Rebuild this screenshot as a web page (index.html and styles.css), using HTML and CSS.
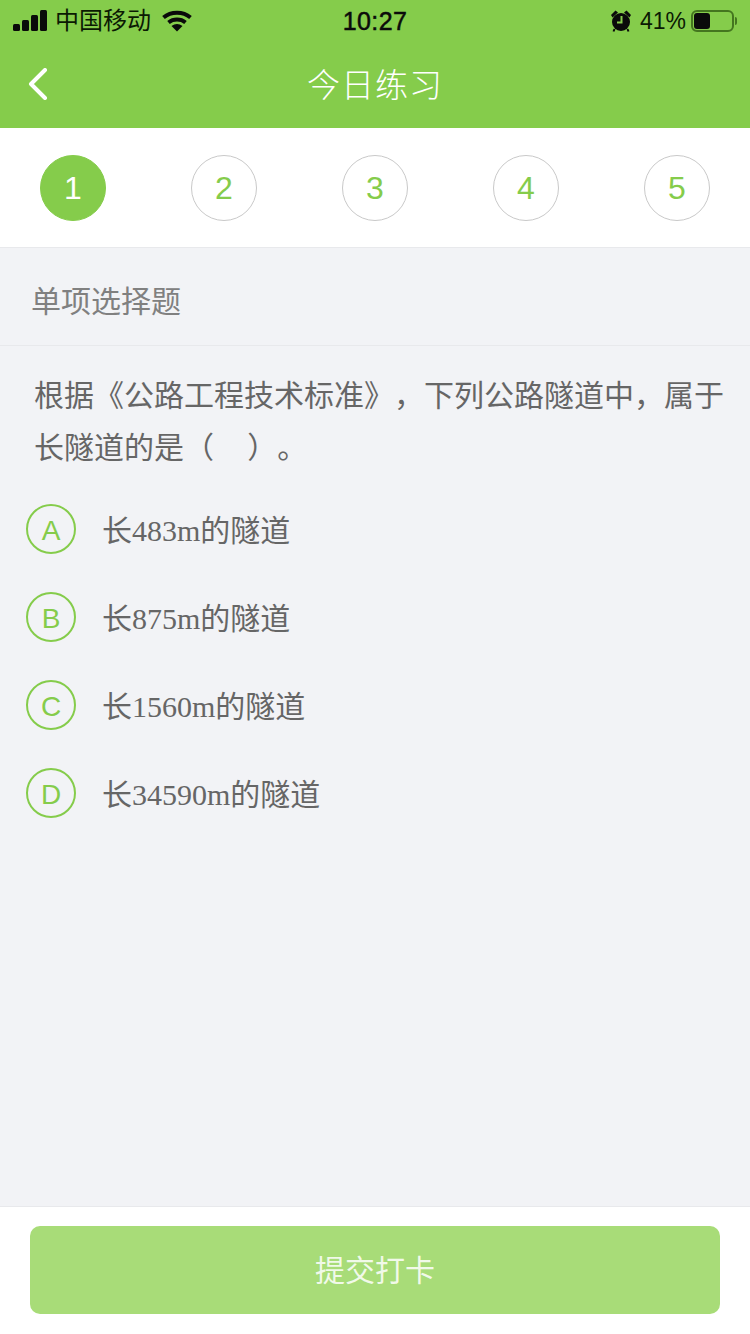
FILE: index.html
```html
<!DOCTYPE html>
<html lang="zh-CN">
<head>
    <meta charset="UTF-8">
    <meta name="viewport" content="width=device-width, initial-scale=1.0">
    <title>今日练习</title>
    <link rel="stylesheet" href="styles.css">
</head>
<body>
    <div class="page">
        <header class="top">
            <div class="status">
                <div class="status-left">
                    <svg class="signal" width="34" height="22" viewBox="0 0 34 22">
                        <rect x="0" y="14" width="7" height="7" rx="1.5"/>
                        <rect x="9" y="10" width="7" height="11" rx="1.5"/>
                        <rect x="18" y="5" width="7" height="16" rx="1.5"/>
                        <rect x="27" y="0" width="7" height="21" rx="1.5"/>
                    </svg>
                    <span class="carrier">中国移动</span>
                    <svg class="wifi" width="30" height="22" viewBox="0 0 30 22">
                        <path d="M1.5 7.5C9 1 21 1 28.5 7.5" class="wave"/>
                        <path d="M6.5 12.5C11.3 8.6 18.7 8.6 23.5 12.5" class="wave"/>
                        <path d="M9.5 16L15 21.5L20.5 16C17 13.2 13 13.2 9.5 16Z"/>
                    </svg>
                </div>
                <div class="status-time">10:27</div>
                <div class="status-right">
                    <svg class="alarm" width="20" height="22" viewBox="0 0 20 22">
                        <circle cx="10" cy="12" r="9"/>
                        <path d="M0 5L4.5 0.5L7 2.5L1.5 7.5Z"/>
                        <path d="M20 5L15.5 0.5L13 2.5L18.5 7.5Z"/>
                        <path d="M3.5 19L2.5 21.5M16.5 19L17.5 21.5" class="leg"/>
                        <path d="M10.5 6V12.5H6" class="hand"/>
                    </svg>
                    <span class="percent">41%</span>
                    <div class="battery"><div class="battery-level"></div></div>
                    <div class="battery-cap"></div>
                </div>
            </div>
            <div class="nav">
                <svg class="back" width="20" height="32" viewBox="0 0 20 32">
                    <path d="M17 2L3 16L17 30"/>
                </svg>
                <h1 class="nav-title">今日练习</h1>
            </div>
        </header>

        <div class="steps">
            <div class="step step-active">1</div>
            <div class="step">2</div>
            <div class="step">3</div>
            <div class="step">4</div>
            <div class="step">5</div>
        </div>

        <main class="content">
            <div class="q-type">单项选择题</div>
            <div class="q-text">根据《公路工程技术标准》，下列公路隧道中，属于长隧道的是（&nbsp;&nbsp;&nbsp;&nbsp;）。</div>
            <div class="options">
                <div class="option"><div class="letter">A</div><div class="option-text">长483m的隧道</div></div>
                <div class="option"><div class="letter">B</div><div class="option-text">长875m的隧道</div></div>
                <div class="option"><div class="letter">C</div><div class="option-text">长1560m的隧道</div></div>
                <div class="option"><div class="letter">D</div><div class="option-text">长34590m的隧道</div></div>
            </div>
        </main>

        <footer class="bottom">
            <button class="submit">提交打卡</button>
        </footer>
    </div>
</body>
</html>
```

FILE: styles.css
```css
* {
    box-sizing: border-box;
}
html, body {
    margin: 0;
    padding: 0;
}
body {
    font-family: "Liberation Sans", "Noto Sans CJK SC", sans-serif;
    background-color: #f2f3f6;
    text-spacing-trim: space-all;
}
.page {
    width: 750px;
    height: 1334px;
    display: flex;
    flex-direction: column;
    overflow: hidden;
}

/* header */
.top {
    height: 128px;
    background-color: #85cc4b;
}
.status {
    height: 42px;
    display: grid;
    grid-template-columns: 1fr auto 1fr;
    align-items: center;
    color: #0b1a03;
}
.status-left {
    display: flex;
    align-items: center;
    padding-left: 13px;
}
.signal {
    fill: #0a0a0a;
    margin-right: 8px;
}
.carrier {
    font-size: 24px;
    margin-right: 11px;
    line-height: 28px;
}
.wifi {
    fill: #0a0a0a;
}
.wifi .wave {
    fill: none;
    stroke: #0a0a0a;
    stroke-width: 4;
}
.status-time {
    font-size: 25px;
    color: #0a0a0a;
    -webkit-text-stroke: 0.5px #0a0a0a;
    letter-spacing: 0.4px;
}
.status-right {
    display: flex;
    align-items: center;
    justify-content: flex-end;
    padding-right: 13px;
}
.alarm {
    fill: #0a0a0a;
    margin-right: 9px;
}
.alarm .leg {
    stroke: #0a0a0a;
    stroke-width: 2;
}
.alarm .hand {
    fill: none;
    stroke: #85cc4b;
    stroke-width: 2;
}
.percent {
    font-size: 23px;
    margin-right: 5px;
}
.battery {
    width: 43px;
    height: 22px;
    border: 2px solid #44761f;
    border-radius: 6px;
    padding: 1px;
}
.battery-level {
    width: 16px;
    height: 100%;
    background-color: #0a0a0a;
    border-radius: 3px;
}
.battery-cap {
    width: 2px;
    height: 8px;
    margin-left: 1px;
    background-color: #44761f;
    border-radius: 0 2px 2px 0;
}
.nav {
    height: 86px;
    position: relative;
    display: flex;
    align-items: center;
    justify-content: center;
}
.back {
    position: absolute;
    left: 28px;
    top: 26px;
    fill: none;
    stroke: #fff;
    stroke-width: 4;
    stroke-linecap: round;
    stroke-linejoin: round;
}
.nav-title {
    margin: 0 0 4px;
    font-size: 33px;
    font-weight: 300;
    color: #fff;
    letter-spacing: 1px;
}

/* numbered steps */
.steps {
    height: 120px;
    background-color: #fff;
    border-bottom: 1px solid #e8e9ec;
    display: flex;
    justify-content: space-between;
    align-items: center;
    padding: 0 40px;
}
.step {
    width: 66px;
    height: 66px;
    padding-top: 1px;
    border: 1px solid #c9c9c9;
    border-radius: 50%;
    display: flex;
    align-items: center;
    justify-content: center;
    font-size: 32px;
    color: #85cc4b;
}
.step-active {
    background-color: #85cc4b;
    border-color: #85cc4b;
    color: #fff;
}

/* question */
.content {
    flex: 1;
}
.q-type {
    height: 98px;
    padding: 5px 0 0 31px;
    display: flex;
    align-items: center;
    border-bottom: 1px solid #e8e9ec;
    font-size: 30px;
    color: #808080;
}
.q-text {
    padding: 24px 20px 0 34px;
    font-size: 30px;
    line-height: 52px;
    color: #666;
}
.options {
    display: flex;
    flex-direction: column;
    gap: 38px;
    padding: 30px 0 0 26px;
}
.option {
    display: flex;
    align-items: center;
    height: 50px;
}
.letter {
    width: 50px;
    height: 50px;
    padding-top: 4px;
    border: 2px solid #85cc4b;
    border-radius: 50%;
    display: flex;
    align-items: center;
    justify-content: center;
    font-size: 28px;
    color: #85cc4b;
}
.option-text {
    margin: 0 0 3px 26px;
    font-family: "Liberation Serif", "Noto Sans CJK SC", serif;
    font-size: 30px;
    color: #666;
}

/* submit button */
.bottom {
    height: 128px;
    background-color: #fff;
    border-top: 1px solid #e8e9ec;
    padding: 19px 30px 0;
}
.submit {
    width: 100%;
    height: 88px;
    padding-bottom: 6px;
    border: none;
    border-radius: 10px;
    background-color: #a8dc78;
    color: rgba(255, 255, 255, 0.85);
    font-family: inherit;
    font-size: 30px;
}
```
